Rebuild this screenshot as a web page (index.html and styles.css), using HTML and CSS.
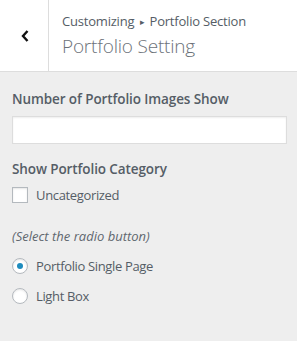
FILE: index.html
```html
<!DOCTYPE html>
<html>
<head>
<meta charset="utf-8">
<link rel="stylesheet" href="styles.css">
</head>
<body>
<div class="header">
  <div class="back">
    <svg width="10" height="12" viewBox="0 0 10 12"><polyline points="7.5,1 3,6 7.5,11" fill="none" stroke="#111" stroke-width="2.4"/></svg>
  </div>
  <div class="titles">
    <div class="crumb">Customizing <span class="tri">&#9656;</span> Portfolio Section</div>
    <div class="title">Portfolio Setting</div>
  </div>
</div>
<div class="content">
  <div class="label">Number of Portfolio Images Show</div>
  <div class="input"></div>
  <div class="label cat">Show Portfolio Category</div>
  <div class="row"><span class="checkbox"></span><span class="opt">Uncategorized</span></div>
  <div class="hint">(Select the radio button)</div>
  <div class="row radio-row"><span class="radio checked"></span><span class="opt">Portfolio Single Page</span></div>
  <div class="row radio-row"><span class="radio"></span><span class="opt">Light Box</span></div>
</div>
</body>
</html>
```
FILE: styles.css
```css
body {
  margin: 0;
  background: #eeeeee;
  font-family: "Open Sans", "Noto Sans", sans-serif;
  color: #555d66;
}
.header {
  display: flex;
  background: #fff;
  height: 71px;
  border-bottom: 1px solid #dddddd;
}
.back {
  width: 47px;
  border-right: 1px solid #dddddd;
  display: flex;
  align-items: center;
  justify-content: center;
  padding-left: 1px;
}
.titles {
  padding: 10px 0 0 13px;
}
.crumb {
  font-size: 13px;
  line-height: 22px;
  letter-spacing: -0.2px;
}
.tri {
  font-size: 9px;
  vertical-align: 1px;
  margin: 0 2px;
}
.title {
  font-size: 19px;
  font-weight: 300;
  line-height: 26px;
  color: #6b7178;
  letter-spacing: -0.2px;
}
.content {
  padding: 17px 12px 0;
}
.label {
  font-size: 13.5px;
  font-weight: 600;
  line-height: 20px;
  letter-spacing: -0.1px;
}
.input {
  margin-top: 7px;
  width: 273px;
  height: 26px;
  background: #fff;
  border: 1px solid #dddddd;
  box-shadow: inset 0 1px 2px rgba(0,0,0,0.07);
}
.label.cat {
  margin-top: 15px;
}
.row {
  display: flex;
  align-items: center;
  gap: 8px;
  font-size: 13px;
  line-height: 20px;
  margin-top: 6px;
  letter-spacing: -0.35px;
}
.checkbox {
  width: 14px;
  height: 14px;
  border: 1px solid #b4b9be;
  background: #fff;
  box-shadow: inset 0 1px 2px rgba(0,0,0,0.1);
}
.hint {
  font-style: italic;
  font-size: 13px;
  line-height: 20px;
  margin-top: 21px;
  letter-spacing: 0;
  color: #60676e;
}
.radio-row {
  margin-top: 0;
  height: 30px;
}
.hint + .radio-row {
  margin-top: 5px;
}
.radio {
  width: 14px;
  height: 14px;
  border: 1px solid #b4b9be;
  border-radius: 50%;
  background: #fff;
  box-shadow: inset 0 1px 2px rgba(0,0,0,0.1);
  display: flex;
  align-items: center;
  justify-content: center;
}
.radio.checked::after {
  content: "";
  width: 6px;
  height: 6px;
  border-radius: 50%;
  background: #1e8cbe;
}
```
